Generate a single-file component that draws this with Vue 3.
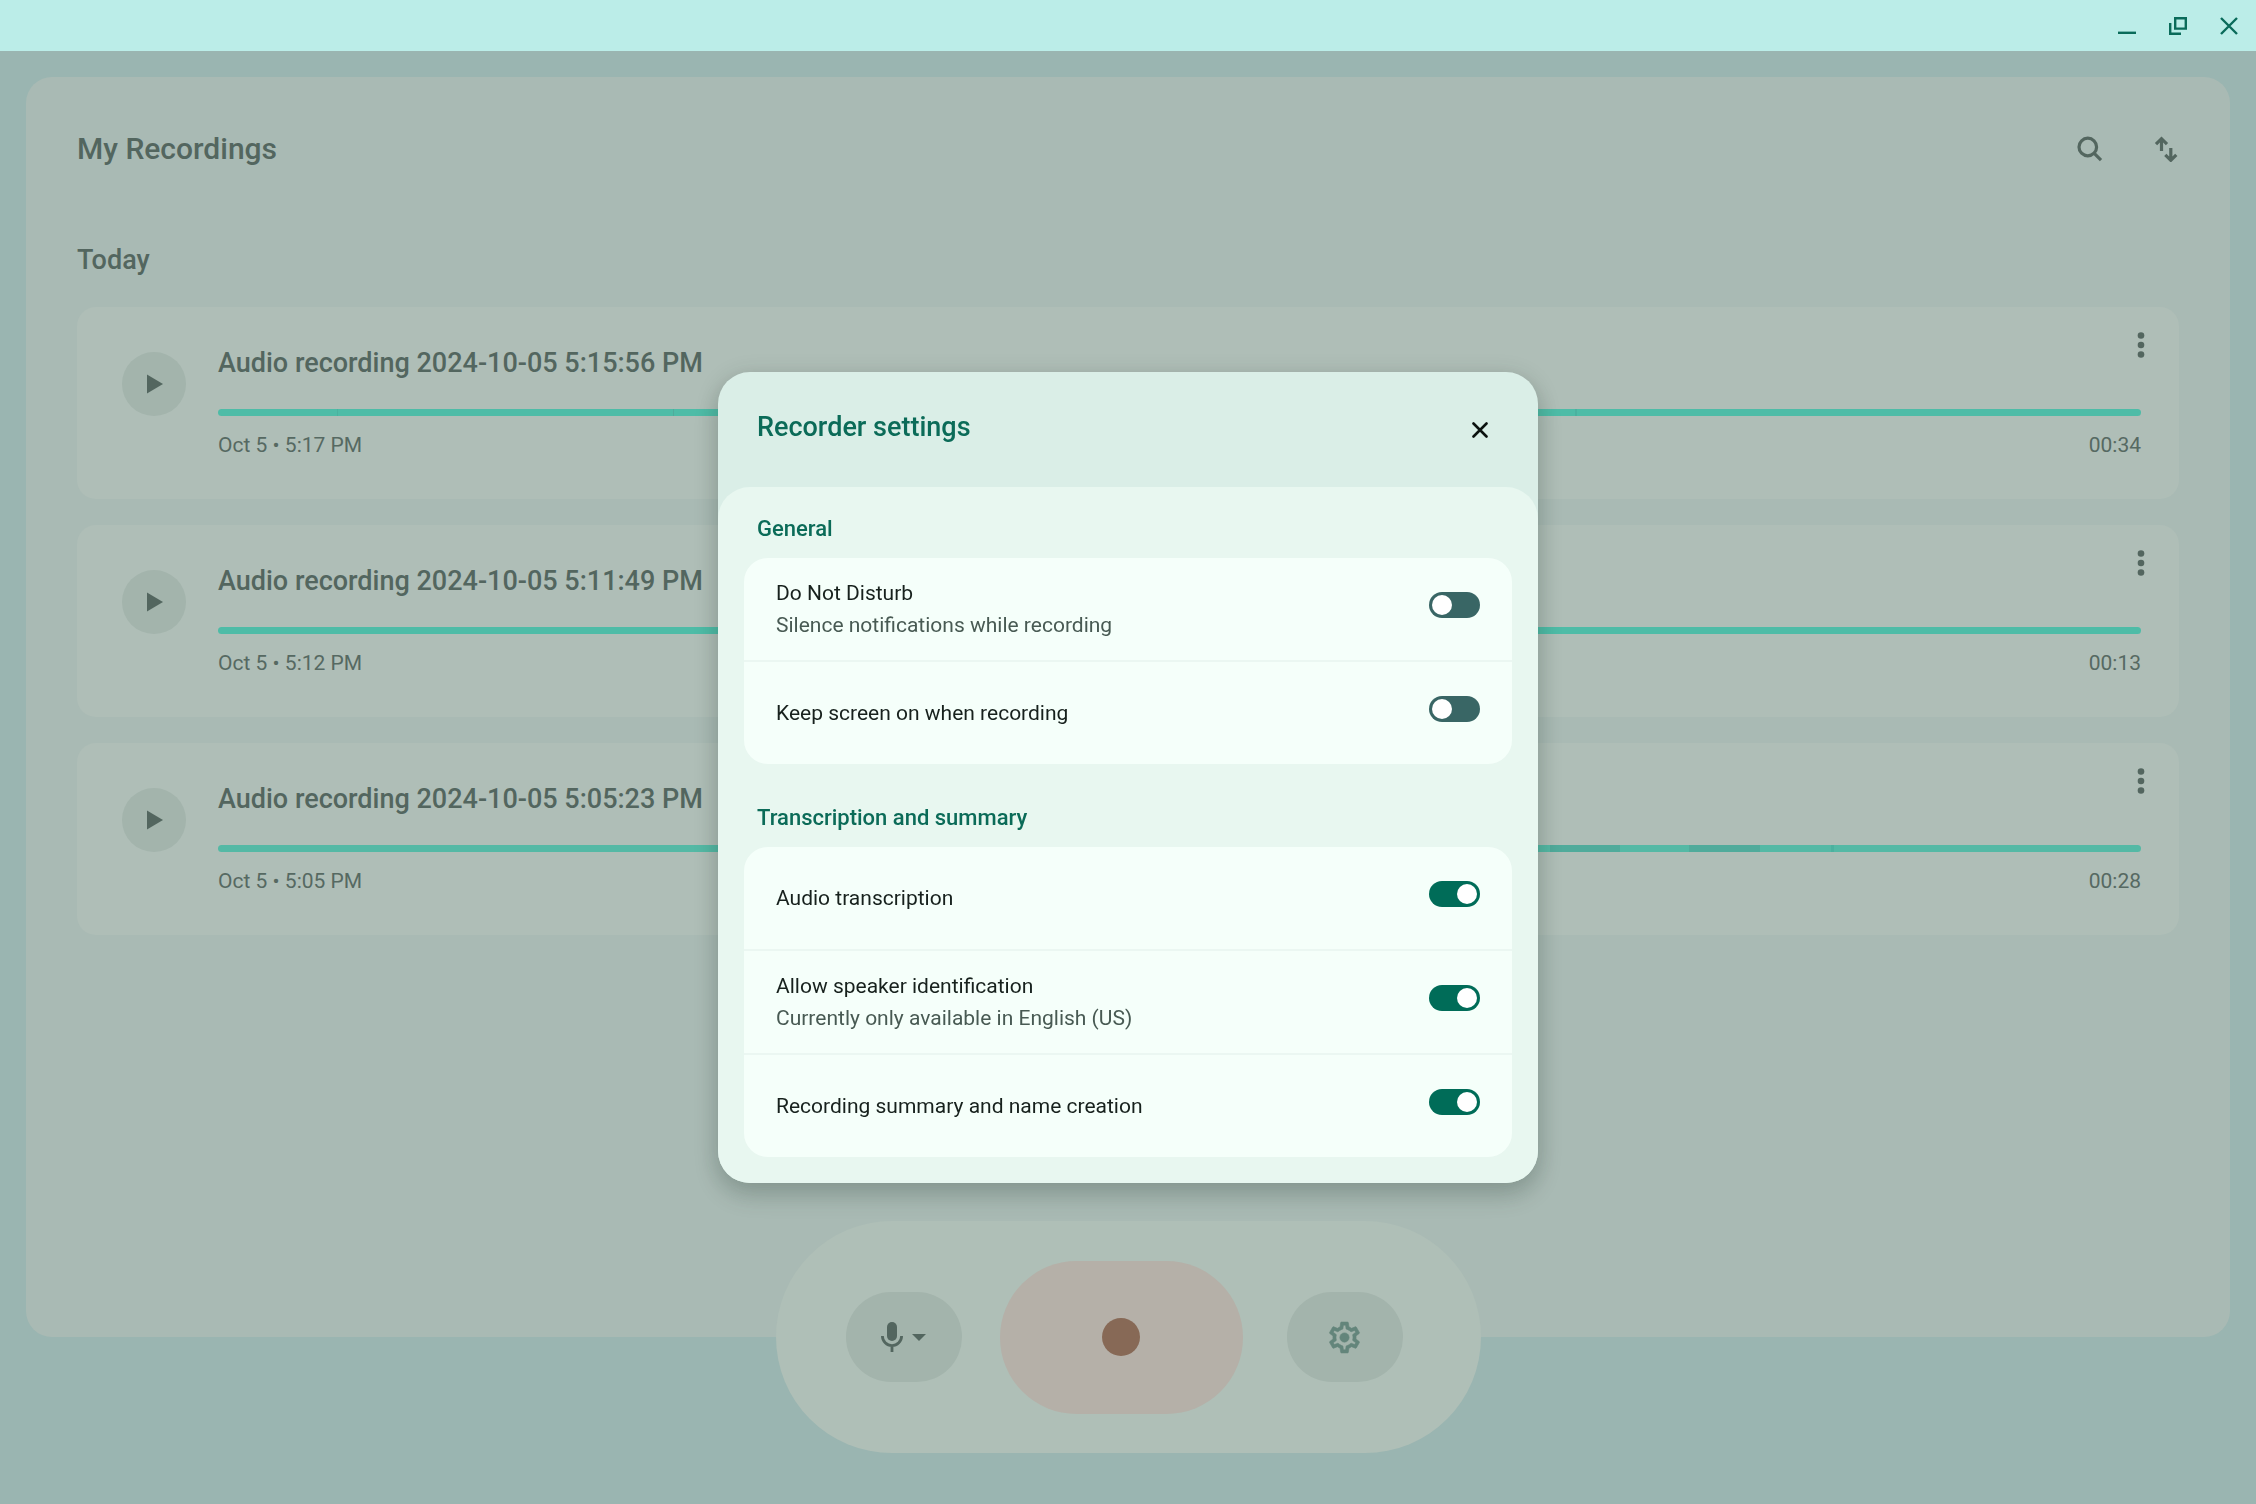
<script setup>
import { ref } from 'vue'

// Each track is a run of waveform segments: [length, shade]
const recordings = [
  {
    title: 'Audio recording 2024-10-05 5:15:56 PM',
    date: 'Oct 5 • 5:17 PM',
    length: '00:34',
    track: [[119, 'bright'], [1, 'mid'], [335, 'bright'], [1, 'deep'], [901, 'bright'], [2, 'mid'], [564, 'bright']],
  },
  {
    title: 'Audio recording 2024-10-05 5:11:49 PM',
    date: 'Oct 5 • 5:12 PM',
    length: '00:13',
    track: [[1923, 'bright']],
  },
  {
    title: 'Audio recording 2024-10-05 5:05:23 PM',
    date: 'Oct 5 • 5:05 PM',
    length: '00:28',
    track: [[1332, 'soft'], [70, 'deep'], [69, 'soft'], [71, 'deep'], [71, 'soft'], [3, 'mid'], [307, 'soft']],
  },
]

const sections = ref([
  {
    title: 'General',
    rows: [
      { id: 'dnd', label: 'Do Not Disturb', note: 'Silence notifications while recording', on: false },
      { id: 'screen', label: 'Keep screen on when recording', on: false },
    ],
  },
  {
    title: 'Transcription and summary',
    rows: [
      { id: 'transcription', label: 'Audio transcription', on: true },
      { id: 'speaker', label: 'Allow speaker identification', note: 'Currently only available in English (US)', on: true },
      { id: 'summary', label: 'Recording summary and name creation', on: true },
    ],
  },
])
</script>

<template>
  <div class="window">
    <header class="titlebar">
      <button type="button" aria-label="Minimize">
        <svg viewBox="0 0 18 18"><path d="M0 15.800h18" /></svg>
      </button>
      <button type="button" aria-label="Restore">
        <svg viewBox="0 0 18 18"><path d="M6.200 1.200h10.600v10.400H6.200zM1.200 6v10.800H12" /></svg>
      </button>
      <button type="button" aria-label="Close window">
        <svg viewBox="0 0 18 18"><path d="M1 1l16 16M17 1L1 17" /></svg>
      </button>
    </header>

    <main class="panel">
      <div class="panel-head">
        <h1>My Recordings</h1>
        <div class="tools">
          <button type="button" aria-label="Search">
            <svg viewBox="0 0 26 26" class="line"><circle cx="10.800" cy="11" r="8.800" /><path d="M17 17.200l7 7" /></svg>
          </button>
          <button type="button" aria-label="Sort">
            <svg viewBox="0 0 26 26" class="line"><path d="M8.500 15V3M3 8.200L8.500 2.700 14 8.200M17.800 12v12M12.300 18.800l5.500 5.500 5.500-5.500" /></svg>
          </button>
        </div>
      </div>

      <h2>Today</h2>
      <ul class="cards">
        <li v-for="rec in recordings" :key="rec.title" class="card">
          <button type="button" class="play" :aria-label="'Play ' + rec.title">
            <svg viewBox="0 0 16 20"><path d="M0 0.500L16 10 0 19.500z" /></svg>
          </button>
          <div class="info">
            <h3>{{ rec.title }}</h3>
            <div class="track">
              <span v-for="(seg, i) in rec.track" :key="i" :class="seg[1]" :style="{ flexGrow: seg[0] }"></span>
            </div>
            <div class="meta">
              <span>{{ rec.date }}</span>
              <span>{{ rec.length }}</span>
            </div>
          </div>
          <button type="button" class="more" aria-label="More options">
            <svg viewBox="0 0 8 26"><circle cx="4" cy="3.500" r="3.300" /><circle cx="4" cy="13" r="3.300" /><circle cx="4" cy="22.500" r="3.300" /></svg>
          </button>
        </li>
      </ul>
    </main>

    <footer class="dock">
      <div class="pod">
        <button type="button" class="side" aria-label="Microphone">
          <svg class="mic" viewBox="0 0 22 30"><rect x="6" y="0" width="10" height="19" rx="5" /><path d="M1.400 14a9.600 9.600 0 0 0 19.200 0M11 23.500V30" /></svg>
          <svg class="caret" viewBox="0 0 14 7"><path d="M0 0h14L7 7z" /></svg>
        </button>
        <button type="button" class="record" aria-label="Start recording"><span></span></button>
        <button type="button" class="side gear" aria-label="Settings">
          <svg viewBox="0 0 24 24"><path fill-rule="evenodd" d="M19.430 12.980c.04-.32.070-.64.070-.98 0-.34-.03-.66-.07-.98l2.110-1.650c.19-.15.24-.42.120-.64l-2-3.460c-.09-.16-.26-.25-.44-.25-.06 0-.12.010-.17.030l-2.490 1c-.52-.4-1.080-.73-1.690-.98l-.38-2.650C14.460 2.180 14.250 2 14 2h-4c-.25 0-.46.180-.49.420l-.38 2.650c-.61.25-1.170.59-1.690.98l-2.490-1c-.06-.02-.12-.03-.18-.03-.17 0-.34.090-.43.250l-2 3.460c-.13.22-.07.49.120.64l2.110 1.650c-.04.32-.07.65-.07.98 0 .33.030.66.070.98l-2.110 1.650c-.19.15-.24.42-.12.64l2 3.460c.09.16.26.25.44.250.06 0 .12-.01.170-.03l2.490-1c.52.4 1.080.73 1.690.98l.38 2.650c.03.24.24.420.490.420h4c.25 0 .46-.18.490-.42l.38-2.650c.61-.25 1.170-.59 1.690-.98l2.490 1c.06.02.12.030.180.030.17 0 .34-.09.430-.25l2-3.460c.12-.22.07-.49-.12-.64l-2.110-1.650zm-1.980-1.710c.04.31.050.52.050.73 0 .21-.02.43-.05.73l-.14 1.130.89.700 1.080.84-.7 1.210-1.270-.51-1.040-.42-.9.680c-.43.32-.84.560-1.250.73l-1.060.43-.16 1.130-.2 1.350h-1.400l-.19-1.350-.16-1.130-1.060-.43c-.43-.18-.83-.41-1.230-.71l-.91-.7-1.060.43-1.270.51-.7-1.210 1.080-.84.89-.7-.14-1.130c-.03-.31-.05-.54-.05-.74s.02-.43.050-.73l.14-1.130-.89-.7-1.080-.84.7-1.210 1.270.51 1.040.42.9-.68c.43-.32.84-.56 1.250-.73l1.060-.43.16-1.130.2-1.350h1.390l.19 1.350.16 1.130 1.060.43c.43.180.83.410 1.230.71l.91.7 1.060-.43 1.270-.51.7 1.210-1.070.85-.89.7.14 1.130z" /><circle cx="12" cy="12" r="3" /></svg>
        </button>
      </div>
    </footer>

    <div class="overlay">
      <section class="dialog" role="dialog" aria-modal="true" aria-labelledby="dialog-title">
        <header class="dialog-head">
          <h2 id="dialog-title">Recorder settings</h2>
          <button type="button" aria-label="Close">
            <svg viewBox="0 0 16 16"><path d="M1.500 1.500l13 13M14.500 1.500l-13 13" /></svg>
          </button>
        </header>
        <div class="dialog-body">
          <section v-for="section in sections" :key="section.title" class="section">
            <h3>{{ section.title }}</h3>
            <div class="group">
              <div v-for="row in section.rows" :key="row.id" class="row">
                <div class="text">
                  <label :for="row.id">{{ row.label }}</label>
                  <p v-if="row.note">{{ row.note }}</p>
                </div>
                <input :id="row.id" v-model="row.on" type="checkbox" role="switch" class="switch" />
              </div>
            </div>
          </section>
        </div>
      </section>
    </div>
  </div>
</template>

<style>
body {
  margin: 0;
}
</style>

<style scoped>
* {
  box-sizing: border-box;
}
.window {
  display: flex;
  flex-direction: column;
  min-height: 100vh;
  background: #9ab5b1;
  color: #53665f;
  font-family: Roboto, "Liberation Sans", sans-serif;
  font-size: 21px;
  line-height: 32px;
}
h1, h2, h3, p, ul {
  margin: 0;
  padding: 0;
}
h1, h2, h3 {
  font-weight: 500;
}
button {
  display: flex;
  align-items: center;
  justify-content: center;
  padding: 0;
  border: 0;
  background: none;
  color: inherit;
  cursor: pointer;
}
svg {
  display: block;
  fill: currentColor;
}

.titlebar {
  display: flex;
  justify-content: flex-end;
  align-items: center;
  gap: 33px;
  height: 51px;
  padding: 0 18px;
  background: #bbede8;
  color: #0a6b5a;
}
.titlebar svg {
  width: 18px;
  height: 18px;
  fill: none;
  stroke: currentColor;
  stroke-width: 2.400;
}

.panel {
  flex: 1;
  margin: 26px 26px 0;
  padding: 52px 51px 128px;
  border-radius: 26px;
  background: #a9bab4;
}
.panel-head {
  display: flex;
  justify-content: space-between;
  align-items: center;
  height: 40px;
  margin-bottom: 75px;
}
h1 {
  font-size: 30px;
  line-height: 40px;
}
h2 {
  font-size: 27px;
}
.tools {
  display: flex;
  gap: 50px;
}
.tools svg {
  width: 26px;
  height: 26px;
}
.line {
  fill: none;
  stroke: currentColor;
  stroke-width: 3.200;
}
.cards {
  display: flex;
  flex-direction: column;
  gap: 26px;
  margin-top: 31px;
  list-style: none;
}
.card {
  position: relative;
  display: flex;
  align-items: flex-start;
  gap: 32px;
  padding: 40px 38px 38px 45px;
  border-radius: 19px;
  background: #afbeb7;
}
.play {
  width: 64px;
  height: 64px;
  margin-top: 5px;
  padding-left: 2px;
  border-radius: 50%;
  background: #a3b4ac;
}
.play svg {
  width: 16px;
  height: 20px;
}
.info {
  flex: 1;
}
.info h3 {
  font-size: 27px;
}
.track {
  display: flex;
  height: 7px;
  margin: 30px 0 13px;
  border-radius: 4px;
  overflow: hidden;
}
.track span {
  flex-basis: 0;
}
.bright {
  background: #4ebca7;
}
.soft {
  background: #54b9a5;
}
.mid {
  background: #4bb19f;
}
.deep {
  background: #50ab9b;
}
.meta {
  display: flex;
  justify-content: space-between;
  color: #566962;
}
.more {
  position: absolute;
  top: 25px;
  right: 34px;
}
.more svg {
  width: 8px;
  height: 26px;
}

.dock {
  display: flex;
  justify-content: center;
  margin-top: -116px;
  padding-bottom: 51px;
}
.pod {
  display: flex;
  align-items: center;
  height: 232px;
  padding: 0 78px 0 70px;
  border-radius: 116px;
  background: #afbfb7;
}
.side {
  gap: 9px;
  width: 116px;
  height: 90px;
  border-radius: 45px;
  background: #a3b4ac;
}
.mic {
  width: 22px;
  height: 30px;
}
.mic path {
  fill: none;
  stroke: currentColor;
  stroke-width: 2.800;
}
.caret {
  width: 14px;
  height: 7px;
}
.record {
  width: 243px;
  height: 153px;
  margin: 0 44px 0 38px;
  border-radius: 77px;
  background: #b5b0a8;
}
.record span {
  width: 38px;
  height: 38px;
  border-radius: 50%;
  background: #876956;
}
.gear {
  color: #63857b;
}
.gear svg {
  width: 37px;
  height: 37px;
  stroke: currentColor;
  stroke-width: 0.400;
}

.overlay {
  position: fixed;
  inset: 51px 0 0;
  display: grid;
  place-items: center;
}
.dialog {
  width: 820px;
  max-width: 100%;
  border-radius: 32px;
  background: #daeee7;
  box-shadow: 0 4px 24px rgba(40, 60, 52, 0.14), 0 12px 24px rgba(40, 60, 52, 0.2);
  color: #0b6b58;
}
.dialog-head {
  display: flex;
  align-items: flex-start;
  justify-content: space-between;
  height: 115px;
  padding: 39px 42px 0 39px;
}
.dialog-head button {
  width: 32px;
  height: 38px;
  color: #0c1210;
}
.dialog-head svg {
  width: 16px;
  height: 16px;
  stroke: currentColor;
  stroke-width: 2.600;
  stroke-linecap: round;
}
.dialog-body {
  display: flex;
  flex-direction: column;
  gap: 38px;
  padding: 26px;
  border-radius: 32px;
  background: #e8f7f0;
}
.section h3 {
  margin-bottom: 13px;
  padding-left: 13px;
  font-size: 22px;
}
.group {
  display: flex;
  flex-direction: column;
  gap: 2px;
  border-radius: 24px;
  overflow: hidden;
  background: #ebf7f2;
}
.row {
  display: flex;
  align-items: center;
  justify-content: space-between;
  height: 102px;
  padding: 0 32px;
  background: #f5fffa;
}
.row label {
  color: #17211d;
}
.row p {
  color: #485a53;
}
.switch {
  appearance: none;
  width: 51px;
  height: 26px;
  margin: 0 0 8px;
  padding: 3px;
  border-radius: 13px;
  background: #396665;
  cursor: pointer;
}
.switch::before {
  content: "";
  display: block;
  width: 20px;
  height: 20px;
  border-radius: 50%;
  background: #fff;
}
.switch:checked {
  background: #006c58;
}
.switch:checked::before {
  margin-left: auto;
}
</style>
